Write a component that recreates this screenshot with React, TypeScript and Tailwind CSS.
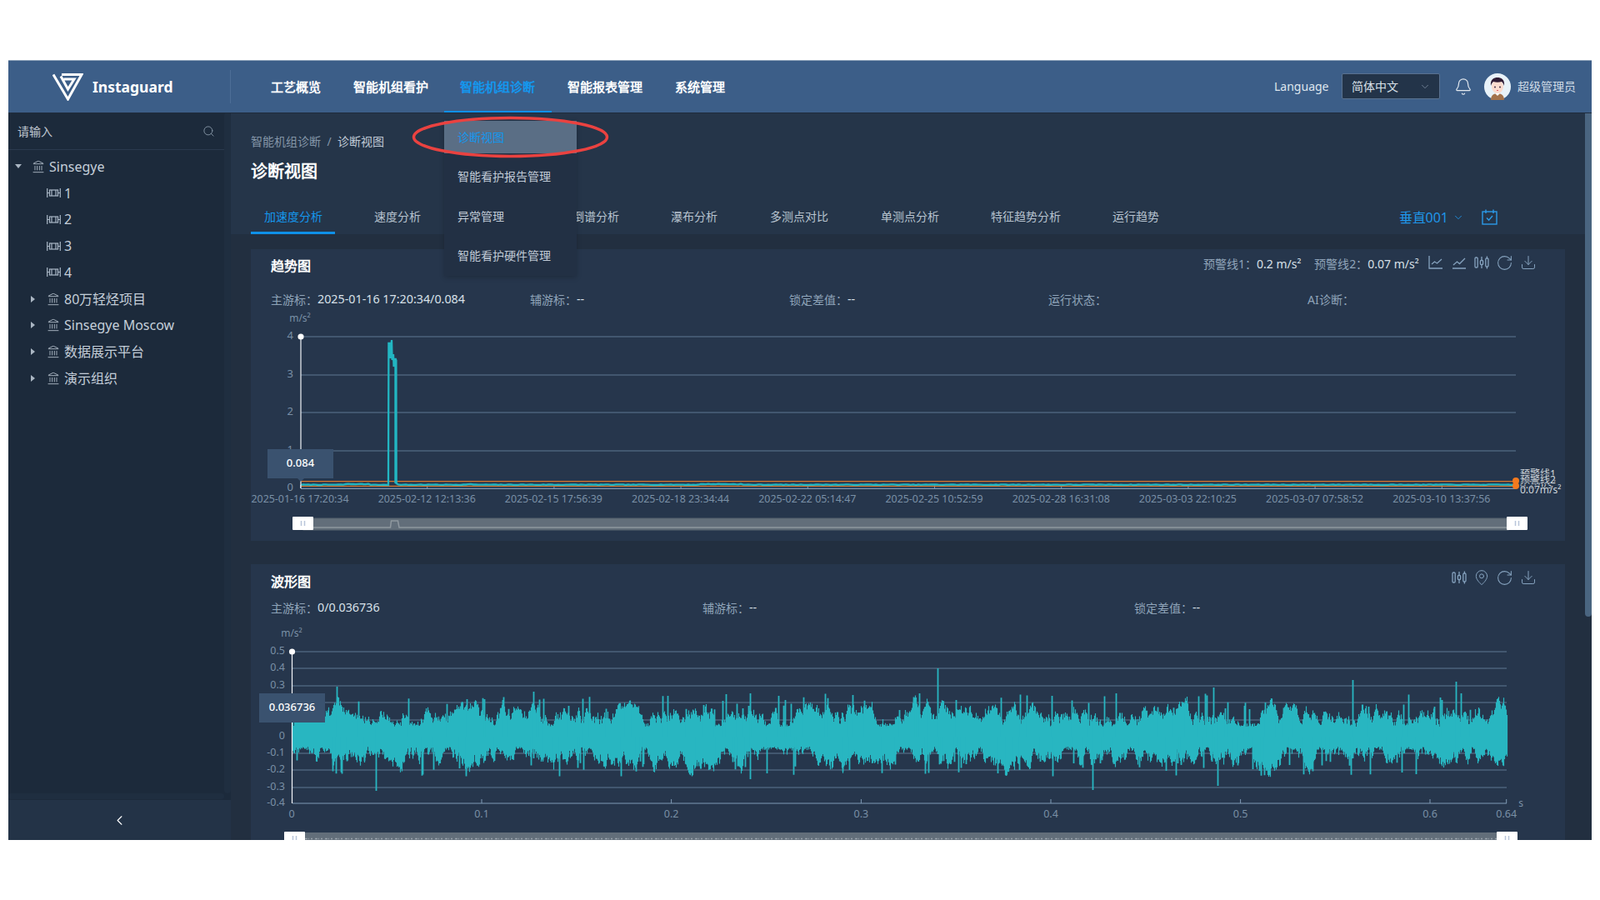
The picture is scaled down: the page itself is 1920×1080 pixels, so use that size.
import { useMemo } from 'react';
import { Bell, ChevronDown, ChevronLeft, Download, Landmark, MapPin, RotateCw, Search } from 'lucide-react';

const navItems = ['工艺概览', '智能机组看护', '智能机组诊断', '智能报表管理', '系统管理'];
const menuItems = ['智能看护报告管理', '异常管理', '智能看护硬件管理'];
const tabs = [
  { name: '加速度分析', className: 'ml-0 w-[101px]' },
  { name: '速度分析', className: 'ml-[31.7px] w-[87px]' },
  { name: '包络分析', className: 'ml-[31.7px] w-[87px]' },
  { name: '倒谱分析', className: 'ml-[31.7px] w-[87px]' },
  { name: '瀑布分析', className: 'ml-[31.7px] w-[87px]' },
  { name: '多测点对比', className: 'ml-[31.7px] w-[101px]' },
  { name: '单测点分析', className: 'ml-[31.7px] w-[101px]' },
  { name: '特征趋势分析', className: 'ml-[31.7px] w-[114px]' },
  { name: '运行趋势', className: 'ml-[31.7px] w-[87px]' },
];

const tree = [
  { label: 'Sinsegye', kind: 'bank', caret: 'down', rowClass: 'pl-[8px]' },
  { label: '1', kind: 'device', rowClass: 'pl-[26px]' },
  { label: '2', kind: 'device', rowClass: 'pl-[26px]' },
  { label: '3', kind: 'device', rowClass: 'pl-[26px]' },
  { label: '4', kind: 'device', rowClass: 'pl-[26px]' },
  { label: '80万轻烃项目', kind: 'bank', caret: 'right', rowClass: 'pl-[26px]' },
  { label: 'Sinsegye Moscow', kind: 'bank', caret: 'right', rowClass: 'pl-[26px]' },
  { label: '数据展示平台', kind: 'bank', caret: 'right', rowClass: 'pl-[26px]' },
  { label: '演示组织', kind: 'bank', caret: 'right', rowClass: 'pl-[26px]' },
];

const trendDates = [
  '2025-01-16 17:20:34',
  '2025-02-12 12:13:36',
  '2025-02-15 17:56:39',
  '2025-02-18 23:34:44',
  '2025-02-22 05:14:47',
  '2025-02-25 10:52:59',
  '2025-02-28 16:31:08',
  '2025-03-03 22:10:25',
  '2025-03-07 07:58:52',
  '2025-03-10 13:37:56',
];

const waveGrid = [
  { label: '0.5', y: 782 },
  { label: '0.4', y: 802 },
  { label: '0.3', y: 823 },
  { label: '0.2', y: 843 },
  { label: '0.1', y: 864 },
  { label: '0', y: 884 },
  { label: '-0.1', y: 904 },
  { label: '-0.2', y: 924 },
  { label: '-0.3', y: 945 },
  { label: '-0.4', y: 964 },
];

const waveTicks = [
  { label: '0.1', x: 578 },
  { label: '0.2', x: 805.6 },
  { label: '0.3', x: 1033.4 },
  { label: '0.4', x: 1261 },
  { label: '0.5', x: 1488.6 },
  { label: '0.6', x: 1716 },
  { label: '0.64', x: 1807.7 },
];

// fixed outliers read off the reference, x -> [top, bottom]
const waveSpikes: Record<number, [number, number]> = {
  404: [824, 905],
  451: [870, 949],
  1125: [802, 905],
  1311: [866, 948],
  1461: [866, 943],
  1456: [825, 905],
  1623: [816, 910],
  1747: [818, 915],
  640: [830, 910],
  900: [832, 935],
};

function makeRandom(seed: number) {
  let s = seed;
  return () => {
    s = (s * 1664525 + 1013904223) % 4294967296;
    return s / 4294967296;
  };
}

function buildWave() {
  const rand = makeRandom(42);
  let body = '';
  let spikes = '';
  let upper = 22;
  let lower = 22;
  for (let x = 351; x <= 1808; x += 1) {
    // envelopes wander hard so the edge looks like clusters of peaks
    upper += (rand() - 0.5) * 14 + (23 - upper) * 0.13;
    lower += (rand() - 0.5) * 14 + (21 - lower) * 0.13;
    const top = 884 - Math.max(12, upper) - rand() * 4;
    const bottom = 884 + Math.max(12, lower) + rand() * 4;
    body += `M${x + 0.5} ${top.toFixed(1)}V${bottom.toFixed(1)}`;
    const r = rand();
    if (waveSpikes[x]) {
      spikes += `M${x + 0.5} ${waveSpikes[x][0]}V${waveSpikes[x][1]}`;
    } else if (r < 0.055) {
      spikes += `M${x + 0.5} ${(884 - (30 + rand() * 22)).toFixed(1)}V884`;
    } else if (r < 0.11) {
      spikes += `M${x + 0.5} 884V${(884 + (28 + rand() * 20)).toFixed(1)}`;
    }
  }
  return { body, spikes };
}

function buildTrend() {
  const rand = makeRandom(7);
  const points: string[] = [];
  for (let x = 361; x <= 1819; x += 3) {
    if (x > 461 && x < 478) continue;
    const bump = (x > 414 && x < 445) || (x > 560 && x < 566) || (x > 840 && x < 890) ? 0.7 : 0;
    points.push(`${x} ${(582 - rand() * 0.7 - bump).toFixed(1)}`);
    if (x === 460) points.push('466 582', '466.4 412', '468 412', '468.5 430', '470 408', '470.6 432', '472 425', '472.6 440', '474.6 430', '475.2 432', '475.6 580');
  }
  return points.join(' ');
}

function LogoMark() {
  return (
    <svg width="37" height="33" viewBox="0 0 37 33" fill="none" stroke="#fff" strokeWidth="3">
      <path d="M1 1.5 18.5 31 35 1.5H11" />
      <path d="M10 3.5 18.5 19 26 7H13.5" />
    </svg>
  );
}

function Avatar() {
  return (
    <svg width="32" height="32" viewBox="0 0 32 32">
      <circle cx="16" cy="16" r="16" fill="#e8f2f9" />
      <path d="M8 32c0-6 4-8 8-8s8 2 8 8z" fill="#a3724c" />
      <path d="M13 24h6l-3 3z" fill="#fff" />
      <ellipse cx="16" cy="16" rx="7" ry="8" fill="#fbdccf" />
      <path d="M8 15C7 7 12 5 16 5s9 2 8 10c-1-3-2-4-3-5-3 1-7 1-10 0-1 1-2 2-3 5z" fill="#2f1b34" />
      <circle cx="13" cy="16.5" r="0.9" fill="#2f1b34" />
      <circle cx="19" cy="16.5" r="0.9" fill="#2f1b34" />
      <path d="M15 20.5h2" stroke="#e0606a" strokeWidth="1" />
    </svg>
  );
}

function DeviceIcon() {
  return (
    <svg width="17" height="11" viewBox="0 0 17 11" fill="none" stroke="#a9b7c6" strokeWidth="1.2">
      <path d="M.7 0v11M16.3 0v11M1 5.5h2.5M13.5 5.5H16" />
      <rect x="3.5" y="2" width="10" height="7" />
      <path d="M6 2v7M11 2v7" />
    </svg>
  );
}

function AxisLineIcon() {
  return (
    <svg width="18" height="18" viewBox="0 0 18 18" fill="none" stroke="#86a3bf" strokeWidth="1.3">
      <path d="M1 1v15h16M4 11l3.5-3 3 2L16 5" />
    </svg>
  );
}

function PlainLineIcon() {
  return (
    <svg width="18" height="18" viewBox="0 0 18 18" fill="none" stroke="#86a3bf" strokeWidth="1.3">
      <path d="M1 16h16M2 12l4.5-4 3 2.5L16 4" />
    </svg>
  );
}

function CandleIcon() {
  return (
    <svg width="18" height="18" viewBox="0 0 18 18" fill="none" stroke="#86a3bf" strokeWidth="1.3">
      <rect x="1" y="3" width="3.2" height="12" rx="1.2" />
      <rect x="7.4" y="6.5" width="3.2" height="5" rx="1" />
      <rect x="13.8" y="4" width="3.2" height="10" rx="1.2" />
      <path d="M9 2v4.5M9 11.5V16M15.4 1.5V4M15.4 14v2.5" />
    </svg>
  );
}

function CalendarCheckIcon() {
  return (
    <svg width="19" height="19" viewBox="0 0 19 19" fill="none" stroke="#2b9be8" strokeWidth="1.4">
      <rect x="1" y="3" width="17" height="15" />
      <path d="M5 .5V5M14 .5V5M6 10.5l2.6 2.6L13 8" />
    </svg>
  );
}

function ToolIcon({ children }: { children: React.ReactNode }) {
  return <span className="flex w-[18px] justify-center">{children}</span>;
}

function Field({ label, value }: { label: string; value?: string }) {
  return (
    <div className="flex h-5 items-center text-[14px] whitespace-nowrap">
      <span className="text-[#8fa4b9]">{label}：</span>
      {value && <span className="text-[14.3px] text-[#d8e0e8]">{value}</span>}
    </div>
  );
}

function ValueTip({ value, className }: { value: string; className: string }) {
  return (
    <div className={`absolute flex items-center justify-center bg-[#3a526f] pb-[2px] text-[13px] font-medium text-white ${className}`}>
      {value}
    </div>
  );
}

function TrendChart() {
  const trend = useMemo(buildTrend, []);
  return (
    <div className="relative h-[280px]">
      <svg className="block h-[280px] w-full" viewBox="301 369 1577 280">
        <text x="360" y="386" textAnchor="middle" className="fill-[#7a90a6] text-[12px]">m/s²</text>
        {[
          { label: '4', y: 404 },
          { label: '3', y: 450 },
          { label: '2', y: 495 },
          { label: '1', y: 541 },
        ].map((row) => (
          <g key={row.label}>
            <path d={`M361 ${row.y}H1819`} stroke="#5f7892" strokeWidth="1.2" />
            <text x="352" y={row.y + 3} textAnchor="end" className="fill-[#7a90a6] text-[13px]">{row.label}</text>
          </g>
        ))}
        <text x="352" y="589" textAnchor="end" className="fill-[#7a90a6] text-[13px]">0</text>
        <path d="M361 586.3H1819" stroke="#7f9ab5" strokeWidth="1.2" />
        {trendDates.map((date, i) => (
          <g key={date}>
            <path d={`M${360.5 + i * 152.2} 586V582`} stroke="#7f9ab5" />
            <text x={360 + i * 152.2} y="603" textAnchor="middle" className="fill-[#7a90a6] text-[12.4px]">{date}</text>
          </g>
        ))}
        <path d="M361 577.7H1819M361 583.4H1819" stroke="#d9772f" strokeWidth="1.2" />
        <polyline points={trend} fill="none" stroke="#22b6c2" strokeWidth="2.3" />
        <path d="M474.8 432V580" stroke="#22b6c2" strokeWidth="3" />
        <path d="M361 404V586" stroke="#f2f5f8" strokeWidth="1.2" />
        <circle cx="361" cy="404" r="3.6" fill="#fff" />
        <circle cx="1819" cy="577" r="4" fill="#f47a1f" />
        <circle cx="1819" cy="583" r="4" fill="#f47a1f" />
        <g className="fill-[#d0d6dc] text-[12px]">
          <text x="1824" y="573">预警线1</text>
          <text x="1824" y="586">0.2m/s²</text>
          <text x="1824" y="580" stroke="#26364c" strokeWidth="1.5" paintOrder="stroke">预警线2</text>
          <text x="1824" y="592" stroke="#26364c" strokeWidth="1.5" paintOrder="stroke">0.07m/s²</text>
        </g>
        <rect x="364" y="622" width="1446" height="14" fill="#626e7a" stroke="#56636f" />
        <path d="M376 633H468.5l1-8h8l1.5 8H1808" fill="none" stroke="#8f989f" strokeWidth="1.5" />
        {[351, 1808].map((x) => (
          <g key={x}>
            <rect x={x} y="620" width="25" height="16" rx="1" fill="#fff" />
            <path d={`M${x + 10.5} 625v6M${x + 14.5} 625v6`} stroke="#b9c5da" strokeWidth="1.5" />
          </g>
        ))}
      </svg>
      <ValueTip value="0.084" className="left-[20px] top-[170px] h-[35px] w-[79px]" />
      <div className="absolute left-[56px] top-[205px] h-0 w-0 border-x-[4px] border-t-[4px] border-x-transparent border-t-[#3a526f]" />
    </div>
  );
}

function WaveChart() {
  const wave = useMemo(buildWave, []);
  return (
    <div className="relative h-[269px]">
      <svg className="block h-[269px] w-full" viewBox="301 739 1577 269">
        <text x="350" y="764" textAnchor="middle" className="fill-[#7a90a6] text-[12px]">m/s²</text>
        {waveGrid.map((row) => (
          <g key={row.label}>
            <path d={`M351 ${row.y}H1808`} stroke={row.y === 964 ? '#7f9ab5' : '#5f7892'} strokeWidth="1.2" />
            <text x="342" y={row.y + 3} textAnchor="end" className="fill-[#7a90a6] text-[12.5px]">{row.label}</text>
          </g>
        ))}
        <path d={wave.body} fill="none" stroke="#28b6c1" strokeWidth="1.2" />
        <path d={wave.spikes} fill="none" stroke="#28b6c1" strokeWidth="1.8" />
        <path d="M350.5 782V964" stroke="#f2f5f8" strokeWidth="1.2" />
        <circle cx="350.5" cy="782" r="3.6" fill="#fff" />
        <text x="350" y="981" textAnchor="middle" className="fill-[#7a90a6] text-[12.5px]">0</text>
        {waveTicks.map((tick) => (
          <g key={tick.label}>
            <path d={`M${tick.x} 964V959`} stroke="#7f9ab5" />
            <text x={tick.x} y="981" textAnchor="middle" className="fill-[#7a90a6] text-[12.5px]">{tick.label}</text>
          </g>
        ))}
        <text x="1825" y="968" textAnchor="middle" className="fill-[#7a90a6] text-[12px]">s</text>
        <rect x="354" y="999" width="1454" height="12" fill="#626e7a" />
        <path d="M366 1006.5H1796" stroke="#9aa4ac" strokeWidth="1.5" strokeDasharray="3 1 1 2 2 3" />
        {[341, 1796].map((x) => (
          <g key={x}>
            <rect x={x} y="998" width="25" height="16" rx="1" fill="#fff" />
            <path d={`M${x + 10.5} 1003v6M${x + 14.5} 1003v6`} stroke="#b9c5da" strokeWidth="1.5" />
          </g>
        ))}
      </svg>
      <ValueTip value="0.036736" className="left-[10px] top-[93px] h-[35px] w-[79px]" />
    </div>
  );
}

export default function App() {
  return (
    <div lang="zh-CN" className="h-screen overflow-hidden bg-white px-[10px] pt-[72px] font-['Noto_Sans','Noto_Sans_CJK_SC',sans-serif]">
      <div className="flex h-[936px] flex-col overflow-hidden">
        <header className="relative z-20 flex h-[63px] shrink-0 items-stretch border-t border-[#8fa3ba] bg-[#3c5e88] shadow-[0_1px_0_#1f2c3d]">
          <div className="flex w-[265.5px] items-center gap-[11px] pl-[53px]">
            <LogoMark />
            <span className="text-[17.5px] font-bold text-white">Instaguard</span>
          </div>
          <div className="my-[11px] w-px bg-[#4d6e96]" />
          <nav className="ml-[29px] flex">
            {navItems.map((item) => {
              const active = item === '智能机组诊断';
              return (
                <div
                  key={item}
                  className={`relative flex items-center border-b-2 px-[19.4px] pt-[2px] text-[15px] font-bold ${
                    active ? 'border-[#0f90e8] text-[#1497ee]' : 'border-transparent text-white'
                  }`}
                >
                  {item}
                  {active && (
                    <div className="absolute left-0 top-[calc(100%+12px)] z-30 w-[158.5px] bg-[#223044] text-[14px] font-normal shadow-[0_2px_6px_rgba(0,0,0,0.2)]">
                      <div className="flex h-[39px] items-center bg-[#5a6e85] pl-[15.5px] text-[#1497ee]">诊断视图</div>
                      <div className="mt-[4px]">
                        {menuItems.map((menu) => (
                          <div key={menu} className="flex h-[47.6px] items-center pl-[15.5px] text-[#c0cad6]">{menu}</div>
                        ))}
                      </div>
                    </div>
                  )}
                </div>
              );
            })}
          </nav>
          <div className="ml-auto flex items-center pb-[1px] pr-[19px]">
            <span className="text-[14px] text-[#dfe6ee]">Language</span>
            <div className="ml-[15px] flex h-[31px] w-[118.5px] items-center justify-between rounded-[2px] border border-[#5a7290] bg-[#233449] pl-[11px] pr-[10px] text-[14px] text-[#d8e0e8]">
              简体中文
              <ChevronDown size={14} strokeWidth={1} className="text-[#9fb0c2]" />
            </div>
            <Bell size={22} strokeWidth={1.3} className="ml-[17px] text-[#e4eaf0]" />
            <div className="ml-[14px]"><Avatar /></div>
            <span className="ml-[8px] text-[14px] text-[#cfdbe6]">超级管理员</span>
          </div>
        </header>

        <div className="flex min-h-0 flex-1">
          <aside className="flex w-[267px] shrink-0 flex-col bg-[#1c2a3b]">
            <div className="flex min-h-0 flex-1">
              <div className="flex min-w-0 flex-1 flex-col">
                <div className="flex h-[45px] shrink-0 items-center justify-between border-b border-[#2a3a4e] pl-[11px] pr-[11px] text-[14px] text-[#c0c8d2]">
                  请输入
                  <Search size={15} strokeWidth={1.4} className="text-[#8c9bab]" />
                </div>
                <ul className="flex-1 pt-1">
                  {tree.map((node) => (
                    <li key={node.label} className={`flex h-[31.75px] items-center text-[16px] text-[#c4ced9] ${node.rowClass}`}>
                      <span className="flex w-[7px] justify-center">
                        {node.caret === 'down' && <span className="h-0 w-0 border-x-[4px] border-t-[5px] border-x-transparent border-t-[#aab6c2]" />}
                        {node.caret === 'right' && <span className="h-0 w-0 border-y-[4px] border-l-[5px] border-y-transparent border-l-[#aab6c2]" />}
                      </span>
                      <span className="ml-[12.5px] flex w-[17px] justify-center">
                        {node.kind === 'bank' ? <Landmark size={16} strokeWidth={1.3} className="text-[#b8c4d0]" /> : <DeviceIcon />}
                      </span>
                      <span className="ml-[4.5px] whitespace-nowrap">{node.label}</span>
                    </li>
                  ))}
                </ul>
                <div className="mb-px h-[7px] shrink-0 rounded bg-[#1f2e40]" />
              </div>
              <div className="mb-[8px] w-[8px] rounded bg-[#1f2e40]" />
            </div>
            <div className="flex h-[48px] shrink-0 items-center justify-center bg-[#233347]">
              <ChevronLeft size={19} strokeWidth={1.4} className="text-white" />
            </div>
          </aside>

          <main className="min-w-0 flex-1 overflow-hidden bg-[#222f40]">
            <div className="h-[146px] bg-[#253549] px-6 pt-[25px]">
              <div className="flex h-5 items-center text-[14px] leading-5 text-[#8496a8]">
                智能机组诊断
                <span className="mx-[7.5px]">/</span>
                <span className="text-[#c0cad6]">诊断视图</span>
              </div>
              <h1 className="mt-[12px] h-7 text-[20px] font-bold leading-7 text-white">诊断视图</h1>
              <div className="mt-[19px] flex h-[42px] items-stretch">
                {tabs.map((tab, i) => (
                  <div
                    key={tab.name}
                    className={`flex items-center justify-center border-b-[3px] pt-[1px] text-[14px] ${tab.className} ${
                      i === 0 ? 'border-[#0f90e8] text-[#1497ee]' : 'border-transparent text-[#b7c3cf]'
                    }`}
                  >
                    {tab.name}
                  </div>
                ))}
                <div className="ml-auto flex items-center pr-[81px] pt-[1px] text-[16px] text-[#1f95e8]">
                  垂直001
                  <ChevronDown size={14} strokeWidth={1.5} className="ml-[5px]" />
                  <span className="ml-[21px]"><CalendarCheckIcon /></span>
                </div>
              </div>
            </div>

            <div className="px-6 pt-[18px]">
              <section className="h-[350px] bg-[#26364c]">
                <div className="flex h-[42px] items-start justify-between pl-6 pr-[35.5px]">
                  <h2 className="text-[16px] font-bold leading-[41px] text-white">趋势图</h2>
                  <div className="mt-[7px] flex h-5 items-center text-[14px] text-[#d8e0e8]">
                    <span className="text-[#8fa4b9]">预警线1：</span>0.2 m/s²
                    <span className="ml-[16px] text-[#8fa4b9]">预警线2：</span>0.07 m/s²
                    <div className="mb-[2px] ml-[11.5px] flex items-center gap-[9.6px] text-[#86a3bf]">
                      <AxisLineIcon />
                      <PlainLineIcon />
                      <CandleIcon />
                      <ToolIcon><RotateCw size={21} strokeWidth={1.2} className="shrink-0" /></ToolIcon>
                      <ToolIcon><Download size={20} strokeWidth={1.2} className="shrink-0" /></ToolIcon>
                    </div>
                  </div>
                </div>
                <div className="mt-[8px] grid grid-cols-[repeat(5,311px)] pl-6">
                  <Field label="主游标" value="2025-01-16 17:20:34/0.084" />
                  <Field label="辅游标" value="--" />
                  <Field label="锁定差值" value="--" />
                  <Field label="运行状态" />
                  <Field label="AI诊断" />
                </div>
                <TrendChart />
              </section>

              <section className="mt-[28px] bg-[#26364c]">
                <div className="flex h-[42px] items-start justify-between pl-6 pr-[35.5px]">
                  <h2 className="text-[16px] font-bold leading-[42px] text-white">波形图</h2>
                  <div className="mt-[6px] flex h-5 items-center gap-[9.6px] text-[#86a3bf]">
                    <CandleIcon />
                    <ToolIcon><MapPin size={20} strokeWidth={1.2} className="shrink-0" /></ToolIcon>
                    <ToolIcon><RotateCw size={21} strokeWidth={1.2} className="shrink-0" /></ToolIcon>
                    <ToolIcon><Download size={20} strokeWidth={1.2} className="shrink-0" /></ToolIcon>
                  </div>
                </div>
                <div className="grid grid-cols-[repeat(3,518px)] pl-6">
                  <Field label="主游标" value="0/0.036736" />
                  <Field label="辅游标" value="--" />
                  <Field label="锁定差值" value="--" />
                </div>
                <WaveChart />
              </section>
            </div>
          </main>

          <div className="w-[8px] shrink-0 bg-[#222f40]">
            <div className="h-[605px] rounded-b bg-[#4a6580]" />
          </div>
        </div>
      </div>

      {/* red annotation drawn on top of the screenshot */}
      <svg className="pointer-events-none absolute left-[494px] top-[139px] z-40" width="237" height="51" viewBox="0 0 237 51" fill="none">
        <ellipse cx="118.5" cy="25.5" rx="116" ry="23" stroke="#ea4240" strokeWidth="3.5" />
      </svg>
    </div>
  );
}
